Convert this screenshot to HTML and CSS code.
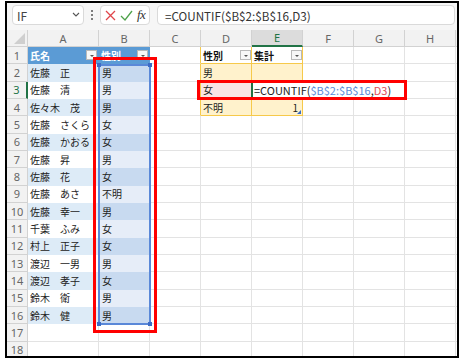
FILE: index.html
```html
<!DOCTYPE html>
<html lang="ja">

<head>
    <meta charset="UTF-8" />
    <title>COUNTIF</title>
    <link rel="stylesheet" href="styles.css">
</head>

<body>
    <div class="window">
        <div class="formula-bar">
            <div class="name-box">
                <span>IF</span>
                <svg width="8" height="6" viewBox="0 0 8 6"><polyline points="1,1 4,4 7,1" fill="none" stroke="#555" stroke-width="1.1" /></svg>
            </div>
            <div class="grip">
                <svg width="4" height="12" viewBox="0 0 4 12"><circle cx="2" cy="2" r="1" /><circle cx="2" cy="6" r="1" /><circle cx="2" cy="10" r="1" /></svg>
            </div>
            <div class="fn-box">
                <svg width="11" height="11" viewBox="0 0 11 11"><path d="M1 1 L10 10 M10 1 L1 10" stroke="#e0454b" stroke-width="1.3" fill="none" /></svg>
                <svg width="13" height="11" viewBox="0 0 13 11"><polyline points="1,6 5,10 12,1" stroke="#4fa24b" stroke-width="1.3" fill="none" /></svg>
                <span class="fx">fx</span>
            </div>
            <div class="formula-input">=COUNTIF($B$2:$B$16,D3)</div>
        </div>

        <div class="sheet" id="sheet">
            <!-- cells are generated below -->
            <div class="ref-range"><i class="h tl"></i><i class="h tr"></i><i class="h bl"></i><i class="h br"></i></div>
            <div class="mark mark-range"></div>
            <div class="mark mark-formula"></div>
        </div>
    </div>

    <script>
        const cols = ["A", "B", "C", "D", "E", "F", "G", "H"];
        const people = [
            ["佐藤　正", "男"], ["佐藤　清", "男"], ["佐々木　茂", "男"], ["佐藤　さくら", "女"],
            ["佐藤　かおる", "女"], ["佐藤　昇", "男"], ["佐藤　花", "女"], ["佐藤　あさ", "不明"],
            ["佐藤　幸一", "男"], ["千葉　ふみ", "女"], ["村上　正子", "女"], ["渡辺　一男", "男"],
            ["渡辺　孝子", "女"], ["鈴木　衛", "男"], ["鈴木　健", "男"]
        ];
        const summary = { 2: "男", 3: "女", 4: "不明" };
        const sheet = document.getElementById("sheet");
        const filter = '<span class="filter"></span>';

        function addCell(cls, html = "") {
            const div = document.createElement("div");
            div.className = "cell " + cls;
            div.innerHTML = html;
            sheet.insertBefore(div, sheet.querySelector(".ref-range"));
        }

        addCell("corner", '<span class="corner-tri"></span>');
        cols.forEach(c => addCell("col-head" + (c === "E" ? " active" : ""), c));
        addCell("filler head");

        for (let r = 1; r <= 18; r++) {
            addCell("row-head" + (r === 3 ? " active" : ""), r);
            const band = r % 2 === 0 ? " band" : "";

            cols.forEach(c => {
                let cls = "";
                let html = "";

                if (c === "A" && r === 1) { cls = "t1-head"; html = "<span>氏名</span>" + filter; }
                else if (c === "B" && r === 1) { cls = "t1-head"; html = "<span>性別</span>" + filter; }
                else if (c === "A" && r <= 16) { cls = "t1" + band; html = people[r - 2][0]; }
                else if (c === "B" && r <= 16) { cls = "t1 ref-blue" + band; html = people[r - 2][1]; }
                else if (c === "C" && r <= 4) { cls = "gold-right"; }
                else if (c === "D" && r === 1) { cls = "t2-head"; html = "<span>性別</span>" + filter; }
                else if (c === "E" && r === 1) { cls = "t2-head"; html = "<span>集計</span>" + filter; }
                else if (c === "D" && r <= 4) { cls = "t2" + band + (r === 3 ? " ref-red" : ""); html = summary[r]; }
                else if (c === "E" && r === 3) {
                    cls = "t2 editing";
                    html = '<div class="edit-box">=COUNTIF(<span class="blue">$B$2:$B$16</span>,<span class="red">D3</span>)</div>';
                }
                else if (c === "E" && r === 4) { cls = "t2 band num"; html = '1<span class="resize"></span>'; }
                else if (c === "E" && r <= 4) { cls = "t2" + band; }

                if (r === 4 && (c === "D" || c === "E")) cls += " gold-bottom";
                addCell(cls, html);
            });

            addCell("filler");
        }
    </script>
</body>

</html>
```

FILE: styles.css
```css
:root {
    --grid: #e3e3e3;
    --head: #f2f2f2;
    --head-line: #d2d2d2;
    --green: #217346;
    --t1-blue: #5b9bd5;
    --t1-band: #ddebf7;
    --gold: #f6c94a;
    --gold-fill: #fff2cc;
    --ref-blue: #5a88d8;
    --mark: #ff0000;
}

body {
    margin: 0;
    background-color: #fff;
    font-family: "Noto Sans CJK JP", "Noto Sans", sans-serif;
}

.window {
    width: 454px;
    height: 357px;
    margin: 1px 0 0 5px;
    border: 2px solid #000;
    box-sizing: border-box;
    overflow: hidden;
    background-color: #fff;
}

/* formula bar */

.formula-bar {
    height: 27px;
    display: flex;
    align-items: flex-start;
    padding: 2px 0 0 5px;
    box-sizing: border-box;
    background-color: #f6f6f6;
}

.name-box,
.fn-box,
.formula-input {
    height: 20px;
    box-sizing: border-box;
    background-color: #fff;
    border: 1px solid #dadada;
    border-radius: 4px;
    display: flex;
    align-items: center;
}

.name-box {
    width: 72px;
    padding: 0 3px 0 4px;
    justify-content: space-between;
    font-size: 12px;
    color: #444;
}

.grip {
    width: 16px;
    height: 20px;
    display: flex;
    align-items: center;
    justify-content: center;
    fill: #555;
}

.fn-box {
    width: 50px;
    padding: 0 2px 0 4px;
    gap: 4px;
}

.fx {
    font-family: "Liberation Serif", serif;
    font-style: italic;
    font-size: 13px;
    color: #333;
    letter-spacing: -0.5px;
}

.formula-input {
    width: 298px;
    margin-left: 7px;
    padding-left: 7px;
    font-size: 11.7px;
    color: #333;
}

/* sheet grid */

.sheet {
    position: relative;
    display: grid;
    grid-template-columns: 21px 71px 51px 51px 51px 51px 51px 51px 51px 1fr;
    grid-template-rows: 17px;
    grid-auto-rows: 17.333px;
}

.cell {
    box-sizing: border-box;
    border-right: 1px solid var(--grid);
    border-bottom: 1px solid var(--grid);
    display: flex;
    align-items: center;
    padding: 0 2px;
    font-size: 10px;
    color: #222;
    white-space: nowrap;
    overflow: hidden;
}

.corner,
.col-head,
.row-head {
    background-color: var(--head);
    border-right-color: var(--head-line);
    border-bottom-color: var(--head-line);
    color: #666;
    font-family: "Noto Sans", sans-serif;
    font-size: 11px;
    justify-content: center;
}

.corner {
    justify-content: flex-end;
    align-items: flex-end;
    padding: 0 2px 2px 0;
}

.corner-tri {
    width: 0;
    height: 0;
    border-left: 11px solid transparent;
    border-bottom: 11px solid #cfcfcf;
}

.col-head.active {
    background-color: #dcdcdc;
    color: var(--green);
    border-bottom: 2px solid var(--green);
}

.row-head.active {
    color: var(--green);
    border-right: 2px solid var(--green);
}

.filler {
    border-right: none;
}

.filler.head {
    background-color: var(--head);
    border-bottom-color: var(--head-line);
}

/* table 1 */

.t1-head {
    background-color: var(--t1-blue);
    border-right-color: var(--t1-blue);
    border-bottom-color: var(--t1-blue);
    color: #fff;
    font-weight: 700;
    justify-content: space-between;
    padding-right: 1px;
}

.t1 {
    border-right-color: #fff;
    border-bottom-color: #fff;
}

.t1.band {
    background-color: var(--t1-band);
    border-right-color: var(--t1-band);
    border-bottom-color: var(--t1-band);
}

.t1.ref-blue {
    background-color: #e6edf8;
    border-color: #e6edf8;
    padding-left: 3px;
}

.t1.ref-blue.band {
    background-color: #c8daf0;
    border-color: #c8daf0;
}

.filter {
    width: 11px;
    height: 10px;
    box-sizing: border-box;
    background-color: #f7f7f7;
    border: 1px solid #b9b9b9;
    display: flex;
    align-items: center;
    justify-content: center;
}

.filter::after {
    content: "";
    border-left: 2px solid transparent;
    border-right: 2px solid transparent;
    border-top: 2px solid #555;
    margin-top: 1px;
}

/* table 2 */

.gold-right {
    border-right-color: var(--gold);
}

.t2-head,
.t2 {
    border-right-color: var(--gold);
}

.t2-head {
    font-weight: 700;
    color: #111;
    justify-content: space-between;
    padding-right: 0;
    border-bottom-color: var(--gold);
}

.t2.band {
    background-color: var(--gold-fill);
    border-bottom-color: #fbe6a8;
}

.t2.gold-bottom {
    border-bottom-color: var(--gold);
}

.t2.ref-red {
    background-color: #f9e4e4;
    border-bottom-color: #f9e4e4;
}

.t2.num {
    justify-content: flex-end;
    padding-right: 4px;
    position: relative;
}

.resize {
    position: absolute;
    right: 1px;
    bottom: 1px;
    width: 0;
    height: 0;
    border-left: 4px solid transparent;
    border-bottom: 4px solid #3b6cc4;
}

.t2.editing {
    overflow: visible;
    padding: 0;
    position: relative;
    z-index: 1;
}

.edit-box {
    width: 153px;
    height: 100%;
    margin-left: -1px;
    box-sizing: border-box;
    background-color: #fff;
    border-left: 2px solid var(--green);
    padding-left: 1px;
    display: flex;
    align-items: center;
    font-size: 11px;
    color: #222;
}

.edit-box .blue {
    color: #5b8bd8;
}

.edit-box .red {
    color: #e0505a;
}

/* range highlight and annotations */

.ref-range {
    position: absolute;
    left: 91px;
    top: 34px;
    width: 53px;
    height: 261px;
    box-sizing: border-box;
    border: 2px solid var(--ref-blue);
    z-index: 2;
}

.ref-range .h {
    position: absolute;
    width: 4px;
    height: 4px;
    background-color: #3d6cc6;
}

.h.tl { left: -3px; top: -3px; }
.h.tr { right: -3px; top: -3px; }
.h.bl { left: -3px; bottom: -3px; }
.h.br { right: -3px; bottom: -3px; }

.mark {
    position: absolute;
    box-sizing: border-box;
    border: 3px solid var(--mark);
    z-index: 3;
}

.mark-range {
    left: 86px;
    top: 27px;
    width: 64px;
    height: 276px;
}

.mark-formula {
    left: 190px;
    top: 50px;
    width: 210px;
    height: 20px;
}
```
